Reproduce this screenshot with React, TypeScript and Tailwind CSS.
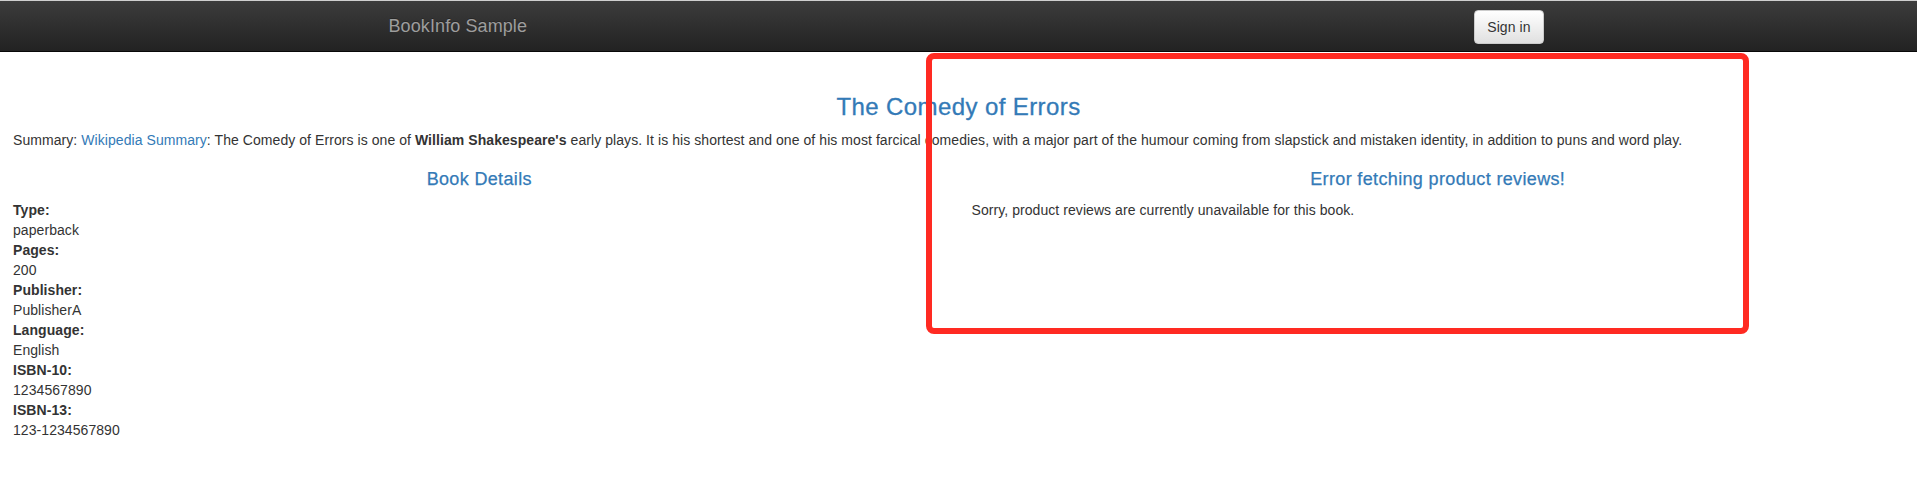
import React from "react";

const details: [string, string][] = [
  ["Type:", "paperback"],
  ["Pages:", "200"],
  ["Publisher:", "PublisherA"],
  ["Language:", "English"],
  ["ISBN-10:", "1234567890"],
  ["ISBN-13:", "123-1234567890"],
];

export default function App() {
  return (
    <div className="relative min-h-screen bg-white font-['Liberation_Sans',Arial,Helvetica,sans-serif] text-[14px] leading-[20px] tracking-[0.065px] text-[#333]">
      <nav className="h-[52px] border-t border-t-[#cfcfcf] border-b border-b-[#080808] bg-[linear-gradient(to_bottom,#3c3c3c,#222222)]">
        <div className="mx-auto flex h-full w-[1170px] items-center justify-between px-[15px]">
          <span className="text-[18px] leading-[20px] tracking-[0.1px] text-[#9d9d9d] [text-shadow:0_-1px_0_rgba(0,0,0,0.25)]">
            BookInfo Sample
          </span>
          <button className="-mr-[15px] mt-[2px] h-[34px] rounded-[4px] border border-[#ccc] bg-[linear-gradient(to_bottom,#ffffff,#e0e0e0)] px-[12px] text-[14px] leading-[20px] text-[#333] shadow-[inset_0_1px_0_rgba(255,255,255,0.15),0_1px_1px_rgba(0,0,0,0.075)]">
            Sign in
          </button>
        </div>
      </nav>

      <main>
        <div className="px-[13px]">
          <h3 className="mt-[42px] mb-[10px] text-center text-[24px] leading-[26.4px] tracking-[0.4px] text-[#337ab7] [-webkit-text-stroke:0.3px_#337ab7]">
            The Comedy of Errors
          </h3>
          <p className="mb-[10px]">
            Summary: <a className="text-[#337ab7]">Wikipedia Summary</a>: The Comedy of Errors is one of{" "}
            <b>William Shakespeare's</b> early plays. It is his shortest and one of his most farcical
            comedies, with a major part of the humour coming from slapstick and mistaken identity, in
            addition to puns and word play.
          </p>
        </div>
        <div className="grid grid-cols-2">
          <div className="px-[13px]">
            <h4 className="mt-[10px] mb-[10px] text-center text-[18px] leading-[19.8px] tracking-[0.35px] text-[#337ab7] [-webkit-text-stroke:0.25px_#337ab7]">
              Book Details
            </h4>
            <dl>
              {details.map(([k, v]) => (
                <React.Fragment key={k}>
                  <dt className="font-bold">{k}</dt>
                  <dd>{v}</dd>
                </React.Fragment>
              ))}
            </dl>
          </div>
          <div className="px-[13px]">
            <h4 className="mt-[10px] mb-[10px] text-center text-[18px] leading-[19.8px] tracking-[0.35px] text-[#337ab7] [-webkit-text-stroke:0.25px_#337ab7]">
              Error fetching product reviews!
            </h4>
            <p>Sorry, product reviews are currently unavailable for this book.</p>
          </div>
        </div>
      </main>

      <div className="pointer-events-none absolute left-[926px] top-[53px] h-[281px] w-[823px] rounded-[8px] border-[6px] border-[#ff2a22]" />
    </div>
  );
}
